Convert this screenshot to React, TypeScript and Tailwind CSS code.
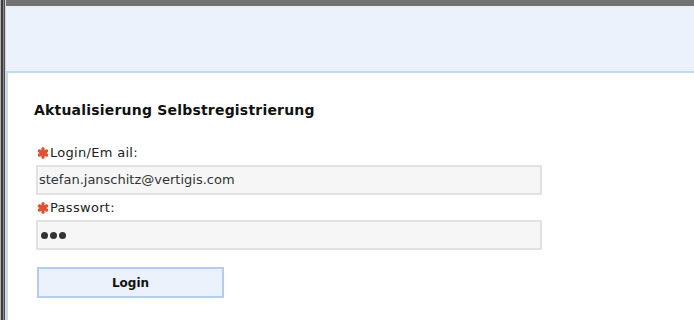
import React from "react";

const Star = () => (
  <svg width="12" height="12" viewBox="0 0 12 12" className="shrink-0">
    <g fill="#de5236">
      <rect x="4.4" y="0.3" width="3.2" height="11.4" rx="1.2" />
      <rect x="4.4" y="0.3" width="3.2" height="11.4" rx="1.2" transform="rotate(60 6 6)" />
      <rect x="4.4" y="0.3" width="3.2" height="11.4" rx="1.2" transform="rotate(-60 6 6)" />
    </g>
  </svg>
);

export default function App() {
  const font = { fontFamily: '"DejaVu Sans", Verdana, sans-serif' };
  return (
    <div className="w-[694px] h-[320px] flex overflow-hidden bg-white" style={font}>
      <div className="flex h-full shrink-0">
        <div className="w-px bg-[#b4b4b4]" />
        <div className="w-[2px] bg-[#3c3c3c]" />
        <div className="w-px bg-[#8a8a8a]" />
        <div className="w-px bg-[#4e4e4e]" />
        <div className="w-px bg-[#d8d8d8]" />
      </div>
      <div className="flex-1 flex flex-col min-w-0">
        <div className="h-[6px] bg-[#727272] shrink-0" />
        <div className="h-[65px] bg-[#eaf1fa] shrink-0" />
        <div className="flex-1 bg-white border-t-2 border-l-2 border-[#c3d8f1] pl-[26px] pt-[28px]">
          <div className="text-[14px] font-bold text-[#111] leading-[18px] tracking-[0.2px]">
            Aktualisierung Selbstregistrierung
          </div>
          <div className="mt-[26px] flex items-center gap-[1px] text-[13px] text-[#222] leading-[16px] tracking-[0.3px] pl-[3px]">
            <Star />
            <span>Login/Em ail:</span>
          </div>
          <div className="mt-[4px] ml-[2px] w-[506px] h-[30px] border-2 border-[#e2e2e2] bg-[#f6f6f6] flex items-center px-[1px] text-[13px] text-[#333]">
            stefan.janschitz@vertigis.com
          </div>
          <div className="mt-[5px] flex items-center gap-[1px] text-[13px] text-[#222] leading-[16px] tracking-[0.3px] pl-[3px]">
            <Star />
            <span>Passwort:</span>
          </div>
          <div className="mt-[4px] ml-[2px] w-[506px] h-[30px] border-2 border-[#e2e2e2] bg-[#f6f6f6] flex items-center px-[3px] gap-[2px]">
            <span className="w-[7px] h-[7px] rounded-full bg-[#333]" />
            <span className="w-[7px] h-[7px] rounded-full bg-[#333]" />
            <span className="w-[7px] h-[7px] rounded-full bg-[#333]" />
          </div>
          <button className="mt-[17px] ml-[3px] w-[187px] h-[31px] border-2 border-[#b3cff0] bg-[#eaf1fa] text-[12px] font-bold text-[#111] flex items-center justify-center">
            Login
          </button>
        </div>
      </div>
    </div>
  );
}
